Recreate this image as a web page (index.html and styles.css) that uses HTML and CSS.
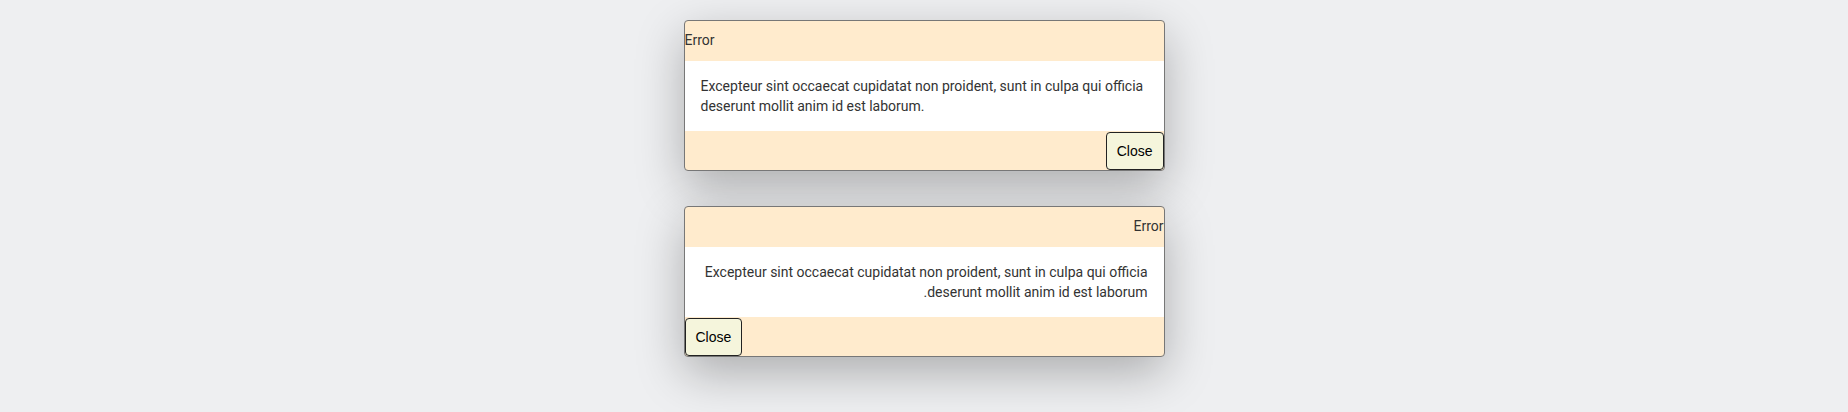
FILE: index.html
```html
<!DOCTYPE html>
<html>
<head>
<meta charset="utf-8">
<link rel="stylesheet" href="styles.css">
</head>
<body>
<div class="stack">
  <div class="dialog">
    <div class="dialog-header">Error</div>
    <div class="dialog-body">Excepteur sint occaecat cupidatat non proident, sunt in culpa qui officia deserunt mollit anim id est laborum.</div>
    <div class="dialog-footer"><button class="btn">Close</button></div>
  </div>
  <div class="dialog" dir="rtl">
    <div class="dialog-header">Error</div>
    <div class="dialog-body">Excepteur sint occaecat cupidatat non proident, sunt in culpa qui officia deserunt mollit anim id est laborum.</div>
    <div class="dialog-footer"><button class="btn">Close</button></div>
  </div>
</div>
</body>
</html>
```
FILE: styles.css
```css
html, body {
  margin: 0;
  padding: 0;
  background: #eeeff1;
}
body {
  font-family: Roboto, sans-serif;
  color: #333;
  min-height: 412px;
}
.stack {
  display: flex;
  flex-direction: column;
  align-items: center;
  gap: 35px;
  padding-top: 20px;
}
.dialog {
  width: 481px;
  box-sizing: border-box;
  border: 1px solid #777;
  border-radius: 4px;
  overflow: hidden;
  background: #ffebcd;
  box-shadow: 0 16px 48px rgba(0, 0, 0, 0.28);
}
.dialog-header {
  height: 40px;
  line-height: 39px;
  font-size: 14px;
  color: #333;
}
.dialog-body {
  background: #fff;
  padding: 15px 16px;
  font-size: 14px;
  line-height: 20px;
  color: #333;
}
.dialog-footer {
  display: flex;
  justify-content: flex-end;
  padding-top: 1px;
}
.btn {
  font-family: "Liberation Sans", Arial, sans-serif;
  font-size: 14px;
  height: 38px;
  padding: 0 10px;
  background: #f5f5dc;
  border: 1px solid #222;
  border-radius: 4px;
  color: #000;
}
```
